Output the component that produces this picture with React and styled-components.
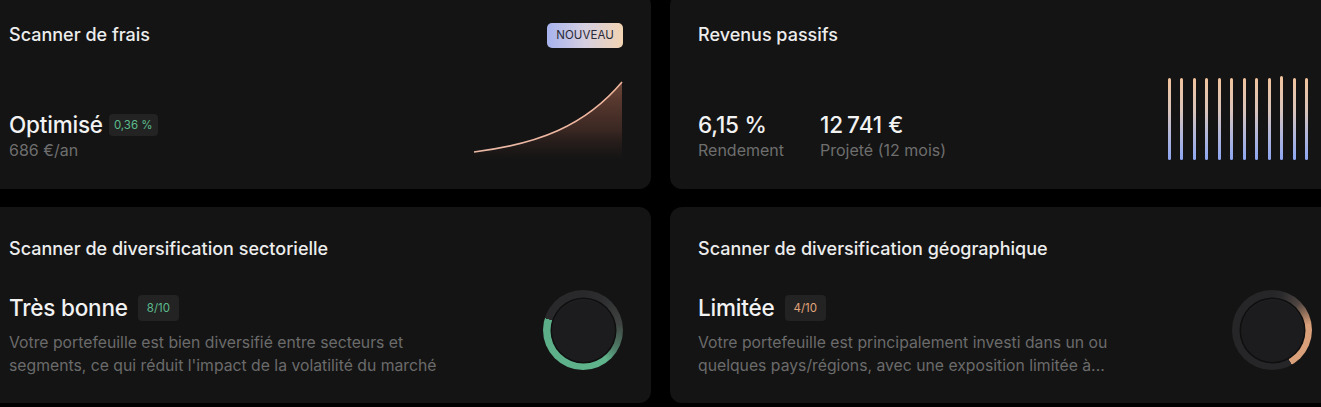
import React from "react";
import styled, { createGlobalStyle } from "styled-components";

const Global = createGlobalStyle`
  html, body { margin: 0; padding: 0; background: #000; overflow: hidden; }
  body { font-family: Inter, "Noto Sans", sans-serif; -webkit-font-smoothing: antialiased; }
`;

const Grid = styled.div`
  display: grid;
  grid-template-columns: 670px 670px;
  grid-auto-rows: 196px;
  column-gap: 19px;
  row-gap: 18px;
  margin: -7px 0 0 -19px;
`;

const Card = styled.div`
  background: #141414;
  border-radius: 12px;
  padding: 30px 28px 28px;
  box-sizing: border-box;
  display: flex;
  flex-direction: column;
  justify-content: space-between;
  overflow: hidden;
`;

const Header = styled.div`
  display: flex;
  align-items: center;
  justify-content: space-between;
  height: 24px;
`;

const Title = styled.div`
  color: #ededed;
  font-size: 18px;
  font-weight: 500;
  line-height: 24px;
`;

const NewBadge = styled.div`
  height: 25px;
  padding: 0 9px;
  border-radius: 5px;
  display: flex;
  align-items: center;
  font-size: 11.5px;
  font-weight: 400;
  letter-spacing: 0.1px;
  color: #2a2a36;
  background: linear-gradient(90deg, #a8b3ee 0%, #d5cfe0 50%, #f2d4b2 100%);
`;

const Bottom = styled.div`
  display: flex;
  align-items: flex-end;
  justify-content: space-between;
`;

const Stats = styled.div`
  display: flex;
  gap: ${(p) => p.$gap || 0}px;
`;

const Stat = styled.div`
  display: flex;
  flex-direction: column;
`;

const ValueRow = styled.div`
  display: flex;
  align-items: center;
  gap: ${(p) => p.$gap || 6}px;
`;

const Value = styled.div`
  color: #f2f2f2;
  font-size: 22.5px;
  font-weight: 500;
  line-height: 28px;
  letter-spacing: -0.2px;
`;

const Sub = styled.div`
  color: #6e6e6e;
  font-size: 16px;
  line-height: 22px;
`;

const Pill = styled.div`
  background: #222322;
  border-radius: 4px;
  color: ${(p) => p.$color};
  font-size: 11.5px;
  height: ${(p) => (p.$large ? 26 : 22)}px;
  padding: 0 ${(p) => (p.$large ? 9 : 5)}px;
  display: flex;
  align-items: center;
`;

const Desc = styled.div`
  color: #6b6b6b;
  font-size: 15.75px;
  line-height: 23px;
  max-width: 450px;
  margin-top: 9px;
  margin-bottom: -2px;
`;

const TextCol = styled.div`
  display: flex;
  flex-direction: column;
`;

const Bars = styled.div`
  display: flex;
  align-items: flex-end;
  gap: 9.5px;
  margin-right: 4px;
  margin-bottom: 1px;
`;

const Bar = styled.div`
  width: 3px;
  border-radius: 2px;
  background: linear-gradient(180deg, #f3c49d 0%, #d9c4bb 40%, #b1b6dc 70%, #8da6f3 100%);
`;

const Ring = styled.div`
  width: 80px;
  height: 80px;
  border-radius: 50%;
  display: flex;
  align-items: center;
  justify-content: center;
  margin-bottom: 5px;
  background: ${(p) => p.$gradient};
  flex-shrink: 0;
`;

const Disc = styled.div`
  width: 63px;
  height: 63px;
  border-radius: 50%;
  background: #1c1c1e;
  box-shadow: 0 0 0 1.5px #0f0f10, inset 0 1px 2px rgba(255,255,255,0.03);
`;

const FeeChart = () => (
  <svg width="150" height="80" viewBox="0 0 150 80">
    <defs>
      <linearGradient id="feeFill" x1="0" y1="0" x2="0" y2="1">
        <stop offset="0" stopColor="#8a5644" stopOpacity="0.75" />
        <stop offset="0.6" stopColor="#6b4034" stopOpacity="0.45" />
        <stop offset="1" stopColor="#3a2620" stopOpacity="0" />
      </linearGradient>
      <linearGradient id="feeStroke" x1="0" y1="0" x2="1" y2="0">
        <stop offset="0" stopColor="#e9b9a6" />
        <stop offset="1" stopColor="#f0b49c" />
      </linearGradient>
    </defs>
    <path d="M1 71 C 65 63, 112 45, 149 1 L149 80 L1 80 Z" fill="url(#feeFill)" />
    <path d="M1 71 C 65 63, 112 45, 149 1" fill="none" stroke="url(#feeStroke)" strokeWidth="1.6" />
  </svg>
);

const barHeights = [82, 82, 82, 82, 82, 82, 82, 82, 82, 84, 82, 82];

const greenRing =
  "conic-gradient(from 0deg, #29292b 0deg, #2d2d2f 30deg, #3e4240 80deg, #4f7d68 120deg, #5fb48c 142deg, #5cae88 287deg, #29292b 287.5deg, #29292b 360deg)";
const orangeRing =
  "conic-gradient(from 0deg, #262628 0deg, #2a2a2c 15deg, #4e4541 45deg, #a67c62 68deg, #d9a07a 82deg, #d9a07a 150deg, #262628 150.5deg, #262628 360deg)";

export default function App() {
  return (
    <>
      <Global />
      <Grid>
        <Card>
          <Header>
            <Title>Scanner de frais</Title>
            <NewBadge>NOUVEAU</NewBadge>
          </Header>
          <Bottom>
            <Stat>
              <ValueRow $gap={6}>
                <Value>Optimisé</Value>
                <Pill $color="#5dbb8e">0,36 %</Pill>
              </ValueRow>
              <Sub>686 €/an</Sub>
            </Stat>
            <FeeChart />
          </Bottom>
        </Card>

        <Card>
          <Header>
            <Title>Revenus passifs</Title>
          </Header>
          <Bottom>
            <Stats $gap={36}>
              <Stat>
                <Value>6,15 %</Value>
                <Sub>Rendement</Sub>
              </Stat>
              <Stat>
                <Value>12{"\u202F"}741 €</Value>
                <Sub>Projeté (12 mois)</Sub>
              </Stat>
            </Stats>
            <Bars>
              {barHeights.map((h, i) => (
                <Bar key={i} style={{ height: h }} />
              ))}
            </Bars>
          </Bottom>
        </Card>

        <Card>
          <Header>
            <Title>Scanner de diversification sectorielle</Title>
          </Header>
          <Bottom>
            <TextCol>
              <ValueRow $gap={10}>
                <Value>Très bonne</Value>
                <Pill $large $color="#5dbb8e">8/10</Pill>
              </ValueRow>
              <Desc>
                Votre portefeuille est bien diversifié entre secteurs et segments, ce qui réduit l'impact de la volatilité du marché
              </Desc>
            </TextCol>
            <Ring $gradient={greenRing}>
              <Disc />
            </Ring>
          </Bottom>
        </Card>

        <Card>
          <Header>
            <Title>Scanner de diversification géographique</Title>
          </Header>
          <Bottom>
            <TextCol>
              <ValueRow $gap={10}>
                <Value>Limitée</Value>
                <Pill $large $color="#e0a57c">4/10</Pill>
              </ValueRow>
              <Desc>
                Votre portefeuille est principalement investi dans un ou quelques pays/régions, avec une exposition limitée à...
              </Desc>
            </TextCol>
            <Ring $gradient={orangeRing}>
              <Disc />
            </Ring>
          </Bottom>
        </Card>
      </Grid>
    </>
  );
}
